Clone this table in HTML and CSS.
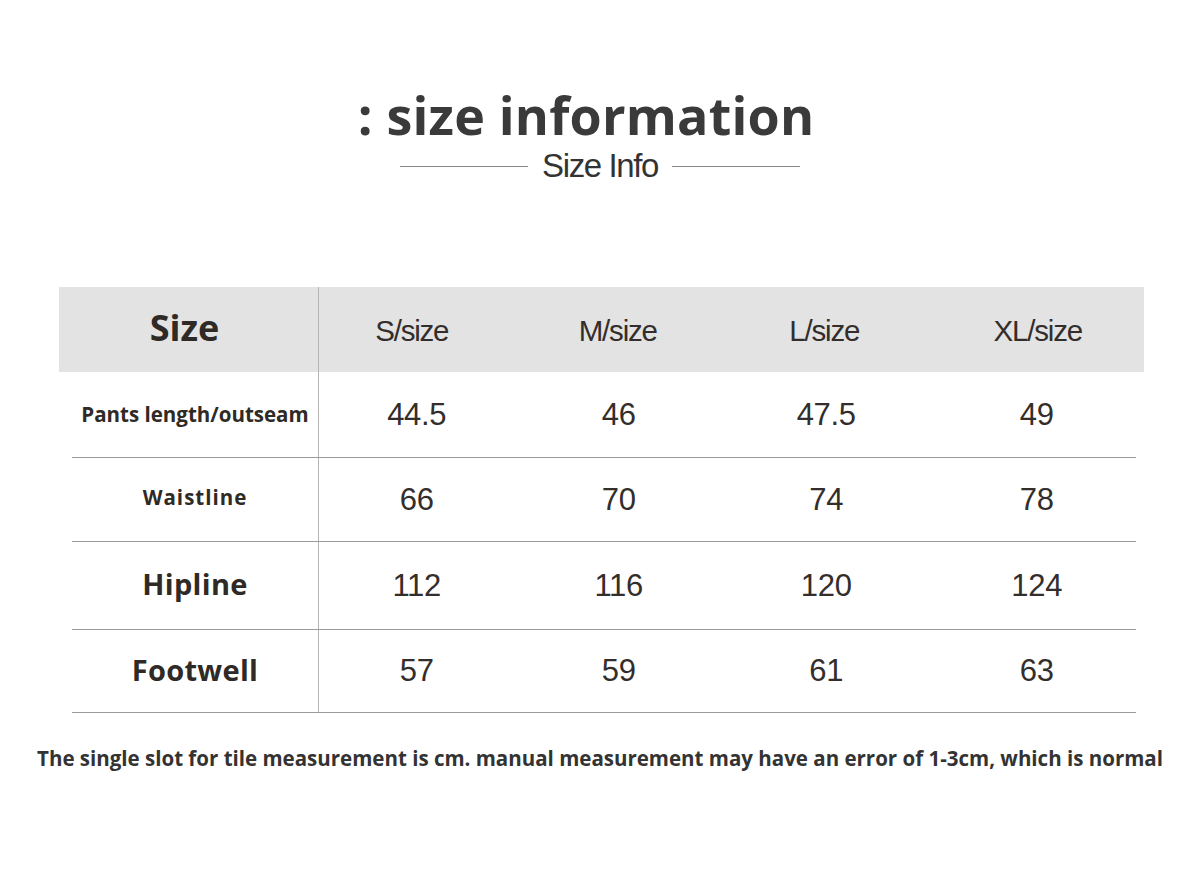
FILE: index.html
```html
<!DOCTYPE html>
<html>
<head>
<meta charset="utf-8">
<link rel="stylesheet" href="styles.css">
</head>
<body>
<div class="page">
  <header class="head">
    <h1 class="title">: size information</h1>
    <div class="sub">
      <span class="rule"></span>
      <span class="sub-text">Size Info</span>
      <span class="rule"></span>
    </div>
  </header>

  <section class="table">
    <div class="row row-head">
      <div class="label label-head">Size</div>
      <div class="cell">S/size</div>
      <div class="cell">M/size</div>
      <div class="cell">L/size</div>
      <div class="cell">XL/size</div>
    </div>
    <div class="row r1">
      <div class="label label-sm">Pants length/outseam</div>
      <div class="cell num">44.5</div>
      <div class="cell num">46</div>
      <div class="cell num">47.5</div>
      <div class="cell num">49</div>
    </div>
    <div class="row r2">
      <div class="label label-sm label-wide">Waistline</div>
      <div class="cell num">66</div>
      <div class="cell num">70</div>
      <div class="cell num">74</div>
      <div class="cell num">78</div>
    </div>
    <div class="row r3">
      <div class="label label-lg">Hipline</div>
      <div class="cell num">112</div>
      <div class="cell num">116</div>
      <div class="cell num">120</div>
      <div class="cell num">124</div>
    </div>
    <div class="row r4">
      <div class="label label-lg">Footwell</div>
      <div class="cell num">57</div>
      <div class="cell num">59</div>
      <div class="cell num">61</div>
      <div class="cell num">63</div>
    </div>
  </section>

  <p class="note">The single slot for tile measurement is cm. manual measurement may have an error of 1-3cm, which is normal</p>
</div>
</body>
</html>
```

FILE: styles.css
```css
html, body {
  margin: 0;
  padding: 0;
  background: #ffffff;
}

.page {
  width: 1200px;
  height: 886px;
  display: flex;
  flex-direction: column;
}

.head {
  display: flex;
  flex-direction: column;
  align-items: center;
  padding-top: 84px;
}

.title {
  margin: 0;
  font-family: "Open Sans", sans-serif;
  font-weight: 700;
  font-size: 52px;
  line-height: 62px;
  color: #3a3a3a;
  letter-spacing: 0.2px;
  transform: translateX(-14px);
}

.sub {
  display: flex;
  align-items: center;
  gap: 14px;
  margin-top: 2px;
}

.rule {
  width: 128px;
  height: 1px;
  background: #8a8a8a;
}

.sub-text {
  font-family: "Liberation Sans", Arial, sans-serif;
  font-size: 33px;
  line-height: 36px;
  letter-spacing: -1.4px;
  color: #333333;
}

.table {
  margin-top: 103px;
  margin-left: 59px;
  width: 1085px;
  display: flex;
  flex-direction: column;
}

.row {
  display: grid;
  grid-template-columns: 246px repeat(4, 1fr);
  margin-left: 13px;
  margin-right: 8px;
  border-bottom: 1px solid #9a9a9a;
}

.row-head {
  margin: 0;
  grid-template-columns: 259px repeat(4, 1fr);
  background: #e3e3e3;
  border-bottom: none;
  height: 85px;
}

.r1 { height: 85px; }
.r2 { height: 83px; }
.r3 { height: 87px; }
.r4 { height: 82px; }

.label {
  display: flex;
  align-items: center;
  justify-content: center;
  font-family: "Open Sans", sans-serif;
  font-weight: 700;
  color: #2f2a26;
}

.label-head {
  font-size: 36px;
  padding-right: 8px;
  padding-bottom: 4px;
}

.label-sm {
  font-size: 20.5px;
  padding-bottom: 2px;
}

.label-wide {
  letter-spacing: 1px;
  padding-bottom: 6px;
}

.label-lg {
  font-size: 29px;
  letter-spacing: 0.3px;
}

.r3 .label-lg {
  padding-bottom: 4px;
}

.r4 .label-lg {
  padding-bottom: 4px;
}

.cell {
  display: flex;
  align-items: center;
  justify-content: center;
  border-left: 1px solid #b5b5b5;
  font-family: "Liberation Sans", Arial, sans-serif;
  font-size: 29.5px;
  letter-spacing: -1.2px;
  color: #332e2b;
}

.cell + .cell {
  border-left: none;
}

.row-head .cell {
  padding-top: 2px;
  padding-right: 20px;
}

.row-head .cell:nth-child(5) {
  padding-right: 6px;
}

.num {
  font-size: 31px;
  letter-spacing: -0.3px;
  padding-right: 8px;
}

.num:nth-child(3) {
  padding-right: 12px;
}

.num:nth-child(4) {
  padding-right: 6px;
}

.num:nth-child(5) {
  padding-right: 0;
  padding-left: 6px;
}

.note {
  margin: 31px 0 0 0;
  text-align: center;
  font-family: "Open Sans", sans-serif;
  font-weight: 700;
  font-size: 20.5px;
  color: #333333;
  letter-spacing: 0;
}
```
